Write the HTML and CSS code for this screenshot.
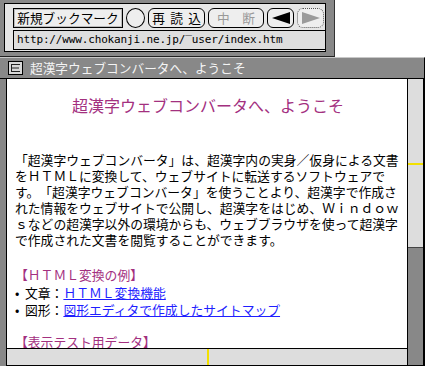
FILE: index.html
```html
<!DOCTYPE html>
<html lang="ja">

<head>
    <meta charset="UTF-8">
    <meta name="viewport" content="width=device-width, initial-scale=1.0">
    <title>超漢字ウェブコンバータ</title>
    <link rel="stylesheet" href="styles.css">
</head>

<body>
    <div class="toolbar">
        <div class="toolbar-inner">
            <div class="tool-row">
                <button type="button" class="btn btn-square">新規ブックマーク</button>
                <button type="button" class="btn btn-circle"></button>
                <button type="button" class="btn btn-round btn-reload">再 読 込</button>
                <button type="button" class="btn btn-round btn-stop">中　断</button>
                <button type="button" class="btn btn-round btn-arrow">
                    <svg width="18" height="12" viewBox="0 0 18 12">
                        <polygon points="0,6 18,0 18,12" fill="#000" />
                    </svg>
                </button>
                <button type="button" class="btn btn-round btn-arrow btn-off">
                    <svg width="18" height="12" viewBox="0 0 18 12">
                        <polygon points="18,6 0,0 0,12" fill="#9a9a9a" />
                    </svg>
                </button>
            </div>
            <div class="url-field">http://www.chokanji.ne.jp/‾user/index.htm</div>
        </div>
    </div>

    <div class="window">
        <div class="titlebar">
            <svg class="title-icon" width="15" height="14" viewBox="0 0 15 14">
                <rect x="0.5" y="0.5" width="14" height="13" fill="#d8d8d8" stroke="#000" />
                <line x1="3" y1="3.5" x2="12" y2="3.5" stroke="#222" />
                <line x1="3" y1="7" x2="11" y2="7" stroke="#222" />
                <line x1="3" y1="10.5" x2="12" y2="10.5" stroke="#222" />
                <line x1="3.5" y1="3" x2="3.5" y2="11" stroke="#222" />
            </svg>
            <span>超漢字ウェブコンバータへ、ようこそ</span>
        </div>

        <div class="window-body">
            <div class="left-frame"></div>

            <div class="main">
                <div class="content">
                    <h1 class="page-title">超漢字ウェブコンバータへ、ようこそ</h1>

                    <p class="intro">「超漢字ウェブコンバータ」は、超漢字内の実身／仮身による文書をＨＴＭＬに変換して、ウェブサイトに転送するソフトウェアです。「超漢字ウェブコンバータ」を使うことより、超漢字で作成された情報をウェブサイトで公開し、超漢字をはじめ、Ｗｉｎｄｏｗｓなどの超漢字以外の環境からも、ウェブブラウザを使って超漢字で作成された文書を閲覧することができます。</p>

                    <div class="section">
                        <div class="section-title">【ＨＴＭＬ変換の例】</div>
                        <div><span class="bullet">•</span>文章：<a href="#">ＨＴＭＬ変換機能</a></div>
                        <div><span class="bullet">•</span>図形：<a href="#">図形エディタで作成したサイトマップ</a></div>
                    </div>

                    <div class="section">
                        <div class="section-title">【表示テスト用データ】</div>
                    </div>
                </div>

                <div class="hscroll">
                    <div class="scroll-mark"></div>
                </div>
            </div>

            <div class="vscroll">
                <div class="vtrack">
                    <div class="scroll-mark"></div>
                </div>
                <div class="vthumb"></div>
            </div>
        </div>
    </div>
</body>

</html>
```

FILE: styles.css
```css
body {
    margin: 0;
    width: 429px;
    height: 372px;
    overflow: hidden;
    background-color: #fff;
    font-family: "Noto Sans CJK JP", sans-serif;
    color: #000;
    text-spacing-trim: space-all;
}

/* tool panel */
.toolbar {
    width: 335px;
    box-sizing: border-box;
    background-color: #888;
    padding: 3px 8px 4px 4px;
    border-right: 1px solid #333;
    border-bottom: 1px solid #222;
}

.toolbar-inner {
    border: 1px solid #000;
    background-color: #e6e6e6;
    padding: 4px 0 1px 8px;
}

.tool-row {
    display: flex;
    gap: 3px;
    height: 20px;
}

.btn {
    height: 20px;
    box-sizing: border-box;
    padding: 0;
    margin: 0;
    border: 1px solid #000;
    background-color: #eee;
    font-family: "Noto Sans CJK JP", sans-serif;
    font-size: 12.7px;
    line-height: 18px;
    color: #000;
    display: flex;
    align-items: center;
    justify-content: center;
}

.btn-square {
    width: 110px;
    box-shadow: inset 0 0 0 1px #bbb;
}

.btn-circle {
    width: 19px;
    border-radius: 50%;
}

.btn-round {
    border-radius: 6px;
}

.btn-reload {
    width: 57px;
    word-spacing: 2.5px;
}

.btn-stop {
    width: 56px;
    color: #999;
}

.btn-arrow {
    width: 27px;
}

.btn-off {
    border: 1px dotted #555;
}

.url-field {
    margin-top: 2px;
    height: 20px;
    box-sizing: border-box;
    border: 1px solid #000;
    border-right: none;
    background-color: #dedede;
    padding-left: 3px;
    font-family: "DejaVu Sans Mono", monospace;
    font-size: 11px;
    letter-spacing: -0.15px;
    line-height: 18px;
    white-space: nowrap;
}

/* browser window */
.window {
    width: 425px;
}

.titlebar {
    height: 22px;
    box-sizing: border-box;
    background-color: #888;
    border-top: 1px solid #c8c8c8;
    border-bottom: 1px solid #000;
    border-right: 1px solid #000;
    padding-left: 8px;
    display: flex;
    align-items: center;
    gap: 7px;
    color: #f4f4f4;
    font-size: 12.7px;
    line-height: 16px;
}

.title-icon {
    display: block;
}

.window-body {
    display: flex;
    height: 287px;
}

.left-frame {
    width: 6px;
    background-color: #888;
    border-right: 1px solid #000;
}

.main {
    flex: 1;
    min-width: 0;
    display: flex;
    flex-direction: column;
}

.content {
    flex: 1;
    overflow: hidden;
    background-color: #fff;
    padding: 16px 6px 0 8px;
}

.page-title {
    margin: 0;
    font-size: 16px;
    line-height: 20px;
    font-weight: normal;
    text-align: center;
    color: #a3307f;
}

.intro {
    margin: 37px 0 0;
    font-size: 12.8px;
    line-height: 16px;
}

.section {
    margin-top: 18px;
    font-size: 12.8px;
    line-height: 17.5px;
}

.section + .section {
    margin-top: 14.5px;
}

.section-title {
    color: #a3307f;
}

.bullet {
    display: inline-block;
    width: 10px;
}

.section a {
    color: #1f1fff;
    text-decoration: underline;
}

.hscroll {
    height: 18px;
    box-sizing: border-box;
    border-top: 1px solid #000;
    border-bottom: 1px solid #000;
    background-color: #ddd;
    padding-left: 200px;
}

.hscroll .scroll-mark {
    width: 2px;
    height: 100%;
    background-color: #f2e000;
}

.vscroll {
    width: 18px;
    box-sizing: border-box;
    border-left: 1px solid #000;
    border-right: 2px solid #000;
    border-bottom: 1px solid #000;
    display: flex;
    flex-direction: column;
}

.vtrack {
    height: 168px;
    box-sizing: border-box;
    padding-top: 84px;
    background-color: #ddd;
}

.vtrack .scroll-mark {
    height: 2px;
    background-color: #f2e000;
}

.vthumb {
    flex: 1;
    background-color: #888;
    border-top: 1px solid #444;
}
```
